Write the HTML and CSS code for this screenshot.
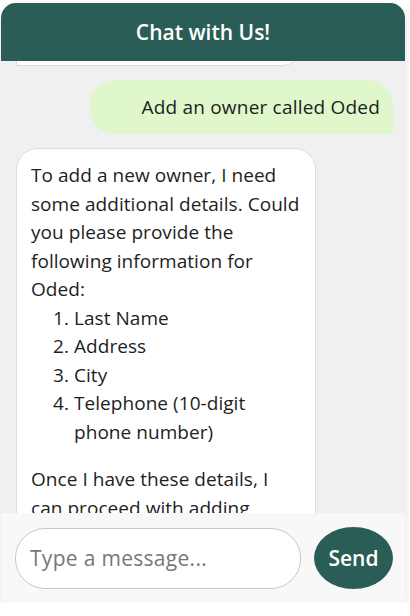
FILE: index.html
```html
<!DOCTYPE html>
<html lang="en">
<head>
<meta charset="utf-8">
<title>Chat with Us!</title>
<link rel="stylesheet" href="styles.css">
</head>
<body>
<div class="widget">
  <div class="header">Chat with Us!</div>
  <div class="messages">
    <div class="thread">
      <div class="bubble bot prev">How can I help you?</div>
      <div class="bubble user">Add an owner called Oded</div>
      <div class="bubble bot">
        <p>To add a new owner, I need some additional details. Could you please provide the following information for Oded:</p>
        <ol>
          <li>Last Name</li>
          <li>Address</li>
          <li>City</li>
          <li>Telephone (10-digit phone number)</li>
        </ol>
        <p>Once I have these details, I can proceed with adding Oded as a new owner.</p>
      </div>
    </div>
  </div>
  <div class="composer">
    <input class="field" type="text" placeholder="Type a message...">
    <button class="send" type="button">Send</button>
  </div>
</div>
</body>
</html>
```
FILE: styles.css
```css
* { box-sizing: border-box; }
html, body { margin: 0; padding: 0; background: #fff; }
body { font-family: "Open Sans", "DejaVu Sans", sans-serif; color: #1e1e1e; }

.widget {
  width: 404px;
  height: 600px;
  margin: 3px 0 0 1px;
  display: flex;
  flex-direction: column;
  border-radius: 15px 15px 0 0;
  overflow: hidden;
  box-shadow: 0 4px 10px rgba(0,0,0,0.12);
  background: #f0f0f0;
}

.header {
  height: 58px;
  flex: none;
  background: #2a5d55;
  color: #fff;
  font-size: 21px;
  font-weight: 600;
  display: flex;
  align-items: center;
  justify-content: center;
}

.messages {
  flex: 1;
  overflow: hidden;
  background: #f0f0f0;
}

.thread {
  display: flex;
  flex-direction: column;
  gap: 14px;
  padding: 0 15px;
  margin-top: -50px;
}

.bubble {
  font-size: 19px;
  letter-spacing: 0.05px;
  line-height: 28.5px;
  padding: 12px 12px 12px 14px;
  width: 300px;
}

.bubble.bot {
  background: #fff;
  border: 1px solid #ddd;
  border-radius: 22px 22px 22px 0;
  align-self: flex-start;
}

.bubble.prev { width: 288px; }

.bubble.user {
  background: #e0f6cb;
  border-radius: 25px 25px 0 25px;
  align-self: flex-end;
  text-align: right;
  width: 303px;
  margin-right: -3px;
  padding: 13px 13px;
  letter-spacing: 0.2px;
}

.bubble p { margin: 0; }
.bubble ol { margin: 0 0 19px; padding-left: 43px; }

.composer {
  flex: none;
  height: 90px;
  background: #f8f8f8;
  display: flex;
  align-items: center;
  gap: 13px;
  padding: 0 12px 0 14px;
}

.field {
  width: 286px;
  height: 61px;
  border: 1px solid #c8c8c8;
  border-radius: 30px;
  background: #fff;
  padding: 0 14px;
  font-family: inherit;
  font-size: 21px;
  letter-spacing: 0.3px;
  color: #222;
  outline: none;
}
.field::placeholder { color: #777; }

.send {
  width: 80px;
  height: 62px;
  border: none;
  border-radius: 50%;
  background: #2a5d55;
  color: #fff;
  font-family: inherit;
  font-size: 21px;
  font-weight: 600;
  padding: 0;
}
```
